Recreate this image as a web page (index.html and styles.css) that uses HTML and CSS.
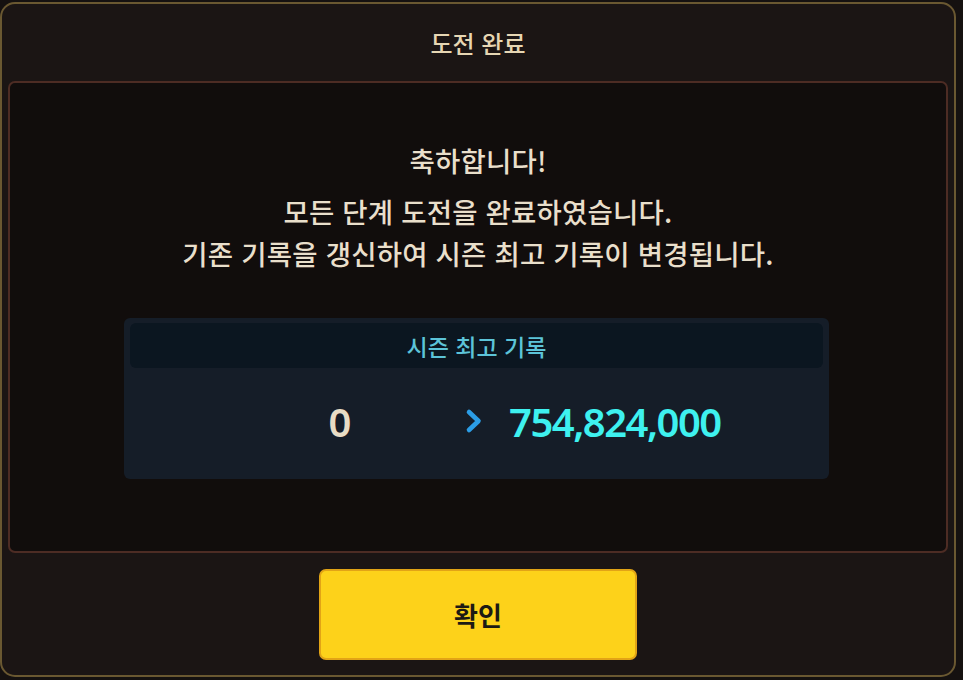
FILE: index.html
```html
<!DOCTYPE html>
<html lang="ko">
<head>
<meta charset="utf-8">
<title>도전 완료</title>
<link rel="stylesheet" href="styles.css">
</head>
<body>
<div class="dialog">
  <div class="dialog-title">도전 완료</div>
  <div class="dialog-body">
    <div class="message">
      <p class="msg-first">축하합니다!</p>
      <p>모든 단계 도전을 완료하였습니다.</p>
      <p>기존 기록을 갱신하여 시즌 최고 기록이 변경됩니다.</p>
    </div>
    <div class="record">
      <div class="record-head">시즌 최고 기록</div>
      <div class="record-row">
        <span class="old">0</span>
        <svg class="chev" width="18" height="26" viewBox="0 0 18 26"><polyline points="4,4 13.5,13 4,22" fill="none" stroke="#2b9de6" stroke-width="4.6" stroke-linecap="round" stroke-linejoin="round"/></svg>
        <span class="new">754,824,000</span>
      </div>
    </div>
  </div>
  <div class="actions">
    <button class="ok">확인</button>
  </div>
</div>
</body>
</html>
```

FILE: styles.css
```css
*, *::before, *::after {
  box-sizing: border-box;
}
html, body {
  margin: 0;
  padding: 0;
  background: #151110;
  font-family: "Noto Sans CJK KR", "Noto Sans", sans-serif;
}
body {
  width: 963px;
  height: 680px;
  overflow: hidden;
}
.dialog {
  margin-top: 2px;
  width: 956px;
  height: 675px;
  border: 2px solid #6a5831;
  border-radius: 15px;
  background: #1b1514;
  display: flex;
  flex-direction: column;
}
.dialog-title {
  height: 77px;
  flex: none;
  display: flex;
  align-items: center;
  justify-content: center;
  color: #e6d6b3;
  font-size: 24px;
  font-weight: 500;
}
.dialog-body {
  margin: 0 6px;
  height: 472px;
  flex: none;
  border: 2px solid #4d2c24;
  border-radius: 7px;
  background: #110d0c;
  display: flex;
  flex-direction: column;
  align-items: center;
}
.message {
  padding-top: 56px;
  text-align: center;
  color: #e9dfcb;
  font-size: 27.5px;
  letter-spacing: 0.2px;
  font-weight: 500;
  line-height: 42px;
}
.message p {
  margin: 0;
}
.message .msg-first {
  margin-bottom: 9px;
}
.record {
  margin-top: 44px;
  margin-right: 3px;
  width: 705px;
  height: 161px;
  padding: 5px 6px;
  background: #151d28;
  border-radius: 6px;
  display: flex;
  flex-direction: column;
}
.record-head {
  height: 45px;
  flex: none;
  border-radius: 6px;
  background: #0b1620;
  color: #5cc4d8;
  font-size: 23px;
  font-weight: 500;
  display: flex;
  align-items: center;
  justify-content: center;
}
.record-row {
  flex: 1;
  display: flex;
  align-items: center;
  font-family: "Noto Sans", sans-serif;
  font-weight: 600;
  font-size: 40px;
  letter-spacing: -1.5px;
}
.old {
  width: 220px;
  text-align: right;
  color: #e8dcc5;
}
.chev {
  margin-left: 115px;
}
.new {
  margin-left: 26px;
  color: #3ef1ef;
}
.actions {
  padding-top: 16px;
  display: flex;
  justify-content: center;
}
.ok {
  width: 318px;
  height: 91px;
  border: 2px solid #e2a416;
  border-radius: 7px;
  background: #fdd21a;
  color: #1c1a14;
  font-family: "Noto Sans CJK KR", sans-serif;
  font-size: 26px;
  font-weight: 700;
  padding: 0;
}
```
